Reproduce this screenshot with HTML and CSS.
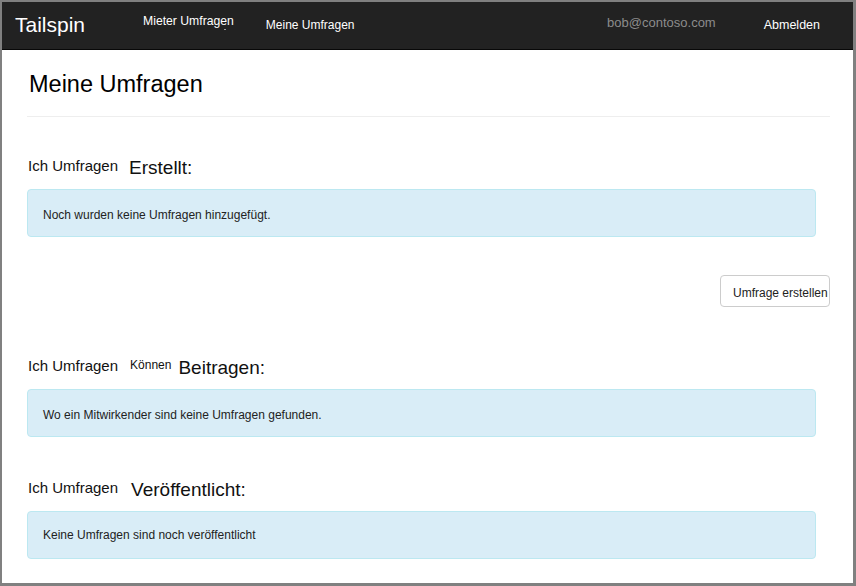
FILE: index.html
```html
<!DOCTYPE html>
<html lang="de">
<head>
<meta charset="utf-8">
<title>Tailspin - Meine Umfragen</title>
<link rel="stylesheet" href="styles.css">
</head>
<body>
<div class="frame">
  <header class="navbar">
    <a class="brand" href="#">Tailspin</a>
    <a class="nav-link nav-tenant" href="#">Mieter Umfragen</a>
    <a class="nav-link nav-mine" href="#">Meine Umfragen</a>
    <span class="nav-user">bob@contoso.com</span>
    <a class="nav-link nav-logout" href="#">Abmelden</a>
  </header>
  <main class="content">
    <h1 class="page-title">Meine Umfragen</h1>
    <hr class="divider">

    <section class="section section-created">
      <div class="sec-head">
        <span class="lead">Ich Umfragen</span>
        <h3 class="sec-title">Erstellt:</h3>
      </div>
      <div class="alert">Noch wurden keine Umfragen hinzugefügt.</div>
      <div class="actions">
        <button class="btn" type="button">Umfrage erstellen</button>
      </div>
    </section>

    <section class="section section-contrib">
      <div class="sec-head">
        <span class="lead">Ich Umfragen</span>
        <span class="small">Können</span>
        <h3 class="sec-title sec-title-after-small">Beitragen:</h3>
      </div>
      <div class="alert alert-2">Wo ein Mitwirkender sind keine Umfragen gefunden.</div>
    </section>

    <section class="section section-published">
      <div class="sec-head">
        <span class="lead">Ich Umfragen</span>
        <h3 class="sec-title sec-title-wide">Veröffentlicht:</h3>
      </div>
      <div class="alert alert-3">Keine Umfragen sind noch veröffentlicht</div>
    </section>
  </main>
</div>
</body>
</html>
```

FILE: styles.css
```css
* { box-sizing: border-box; }

html, body {
  margin: 0;
  padding: 0;
  background: #808080;
}

body {
  font-family: "Liberation Sans", Arial, sans-serif;
}

.frame {
  width: 856px;
  height: 586px;
  border-style: solid;
  border-color: #808080;
  border-width: 2px 3px 3px 2px;
  background: #fff;
  overflow: hidden;
}

/* ---------- navbar ---------- */
.navbar {
  display: flex;
  align-items: flex-start;
  height: 48px;
  background: #222;
  border-bottom: 1px solid #080808;
  padding-left: 13px;
}

.navbar a { text-decoration: none; }

.brand {
  color: #fff;
  font-size: 21px;
  line-height: 20px;
  margin-top: 13px;
}

.nav-link {
  color: #fff;
  font-size: 12px;
  line-height: 16px;
}

.nav-tenant {
  position: relative;
  margin-left: 58px;
  margin-top: 11px;
  font-size: 12.2px;
}

.nav-tenant::after {
  content: "";
  position: absolute;
  left: 81px;
  top: 16px;
  width: 2px;
  height: 1px;
  background: #9a9a9a;
}

.nav-mine {
  margin-left: 32px;
  margin-top: 15px;
}

.nav-user {
  margin-left: auto;
  margin-top: 13px;
  color: #8c8c8c;
  font-size: 13px;
  line-height: 16px;
}

.nav-logout {
  margin-left: 48px;
  margin-right: 33px;
  margin-top: 15px;
  font-size: 12.5px;
}

/* ---------- content ---------- */
.content {
  width: 828px;
  padding-left: 25px;
}

.page-title {
  margin: 21px 0 0 2px;
  font-size: 23.5px;
  line-height: 26px;
  font-weight: normal;
  color: #000;
}

.divider {
  margin: 19px 0 0 0;
  border: 0;
  border-top: 1px solid #eee;
  height: 0;
}

.section-created { margin-top: 40px; }
.section-contrib { margin-top: 50px; }
.section-published { margin-top: 42px; }

.sec-head {
  display: flex;
  align-items: flex-start;
  height: 22px;
  color: #111;
  padding-left: 1px;
}

.lead {
  font-size: 15px;
  line-height: 18px;
}

.small {
  font-size: 12px;
  line-height: 14px;
  margin-left: 12px;
  margin-top: 1px;
}

.sec-title {
  margin: 0 0 0 11px;
  font-size: 19px;
  line-height: 22px;
  font-weight: normal;
}

.sec-title-after-small { margin-left: 7px; }
.sec-title-wide { margin-left: 13px; }

.alert {
  margin: 10px 14px 0 0;
  height: 48px;
  padding: 17px 15px 13px 15px;
  background: #d9edf7;
  border: 1px solid #bce8f1;
  border-radius: 4px;
  color: #222;
  font-size: 12px;
  line-height: 16px;
}

.alert-3 { padding-top: 15px; }

.actions {
  display: flex;
  justify-content: flex-end;
  margin-top: 38px;
}

.btn {
  width: 110px;
  height: 32px;
  padding: 9px 0 5px 12px;
  text-align: left;
  white-space: nowrap;
  overflow: hidden;
  background: #fff;
  border: 1px solid #ccc;
  border-radius: 4px;
  color: #222;
  font-family: "Liberation Sans", Arial, sans-serif;
  font-size: 12px;
  line-height: 16px;
}
```
